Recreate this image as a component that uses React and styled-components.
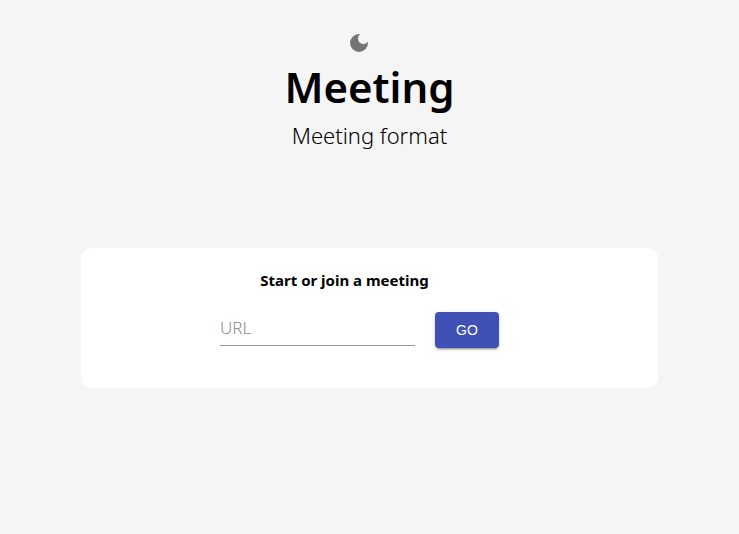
import React from "react";
import styled, { createGlobalStyle } from "styled-components";

const GlobalStyle = createGlobalStyle`
  *, *::before, *::after { box-sizing: border-box; }
  body {
    margin: 0;
    background: #f5f5f5;
    color: #000;
    font-family: "Noto Sans", "Open Sans", sans-serif;
  }
`;

const Page = styled.main`
  display: flex;
  flex-direction: column;
  align-items: center;
  min-height: 100vh;
  padding: 25px 0;
`;

const Header = styled.header`
  display: flex;
  flex-direction: column;
  align-items: center;
  text-align: center;
`;

const ThemeToggle = styled.button`
  display: flex;
  padding: 6px;
  margin-right: 22px;
  border: 0;
  border-radius: 50%;
  background: transparent;
  color: #757575;
  cursor: pointer;

  svg { width: 24px; height: 24px; }
`;

const Title = styled.h1`
  margin: 0;
  font-size: 42px;
  font-weight: 600;
  line-height: 52px;
`;

const Subtitle = styled.p`
  margin: 6px 0 0;
  font-size: 22px;
  font-weight: 300;
  line-height: 32px;
`;

const Card = styled.section`
  width: 78%;
  margin-top: 97px;
  padding: 20px 20px 40px;
  border-radius: 10px;
  background: #fff;
`;

const JoinForm = styled.form`
  display: flex;
  justify-content: center;
  align-items: flex-start;
  gap: 20px;
  margin-right: 20px;
`;

const Heading = styled.h2`
  margin: 0 50px 20px 0;
  font-size: 15px;
  font-weight: 700;
  line-height: 24px;
  text-align: center;
`;

const UrlInput = styled.input`
  width: 195px;
  height: 34px;
  padding: 0 0 2px;
  border: 0;
  border-bottom: 1px solid #949494;
  outline: none;
  background: transparent;
  color: #000;
  font-family: inherit;
  font-size: 17px;
  font-weight: 300;

  &::placeholder { color: #8a8a8a; opacity: 1; }
`;

const GoButton = styled.button`
  min-width: 64px;
  height: 36px;
  padding: 6px 16px;
  border: 0;
  border-radius: 4px;
  background: #3f51b5;
  color: #fff;
  font-family: "Liberation Sans", Arial, sans-serif;
  font-size: 14px;
  box-shadow: 0 3px 1px -2px rgba(0, 0, 0, 0.2), 0 2px 2px 0 rgba(0, 0, 0, 0.14),
    0 1px 5px 0 rgba(0, 0, 0, 0.12);
  cursor: pointer;
`;

export default function App() {
  return (
    <>
      <GlobalStyle />
      <Page>
        <Header>
          <ThemeToggle type="button" aria-label="Toggle dark mode">
            <svg viewBox="0 0 24 24" fill="currentColor" aria-hidden="true">
              <path d="M12 3a9 9 0 1 0 9 9c0-.46-.04-.92-.1-1.36a5.389 5.389 0 0 1-4.4 2.26 5.403 5.403 0 0 1-3.14-9.8c-.44-.06-.9-.1-1.36-.1z" />
            </svg>
          </ThemeToggle>
          <Title>Meeting</Title>
          <Subtitle>Meeting format</Subtitle>
        </Header>
        <Card>
          <Heading>Start or join a meeting</Heading>
          <JoinForm onSubmit={(event) => event.preventDefault()}>
            <UrlInput type="text" placeholder="URL" aria-label="Meeting URL" />
            <GoButton type="submit">GO</GoButton>
          </JoinForm>
        </Card>
      </Page>
    </>
  );
}
